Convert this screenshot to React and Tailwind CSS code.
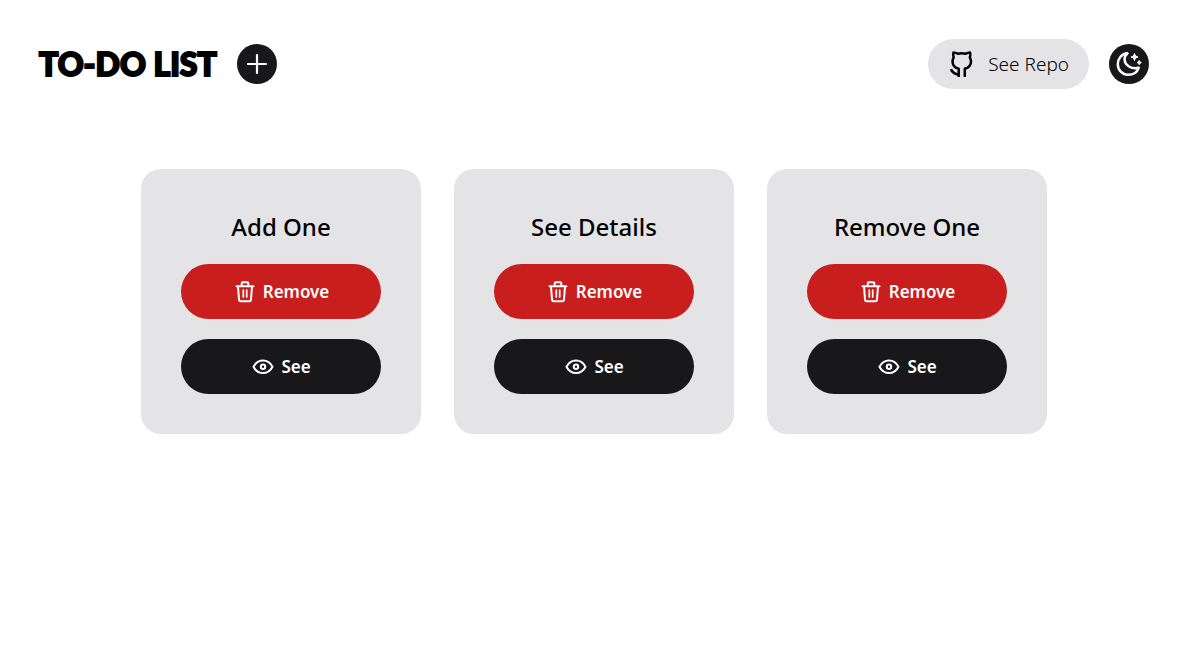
import React from "react";

const todos = ["Add One", "See Details", "Remove One"];

function PlusIcon() {
  return (
    <svg aria-hidden="true" className="size-6" viewBox="0 0 24 24" fill="none" stroke="currentColor" strokeWidth="2.2" strokeLinecap="round">
      <path d="M12 3v18M3 12h18" />
    </svg>
  );
}

function GithubIcon() {
  return (
    <svg aria-hidden="true" className="size-[30px]" viewBox="0 0 30 30" fill="none" stroke="currentColor" strokeWidth="2.5" strokeLinejoin="round">
      <path d="M10.700 28v-8.300c-3.500-1-6.200-3.500-6.200-7.300c0-1.500.4-2.900 1.200-4c-.7-1.700-.7-3.400-.2-5c1.700.1 3 .6 4.300 1.300c2.600-.5 5.300-.5 7.900 0c1.300-.7 2.600-1.200 4.300-1.300c.5 1.600.5 3.300-.2 5c.8 1.100 1.200 2.500 1.200 4c0 3.800-2.700 6.300-6.200 7.300v8.300" />
      <path d="M3 20.300c1 2.700 3.400 4.900 7.700 5.200" />
    </svg>
  );
}

function MoonIcon() {
  return (
    <svg aria-hidden="true" className="size-[30px]" viewBox="0 0 30 30" fill="currentColor" stroke="currentColor" strokeLinejoin="round">
      <path fill="none" strokeWidth="2.500" d="M13.500 4.300C7.800 4.600 3.800 9.700 3.800 15.200C3.800 21 8.300 25.800 14 25.800C19 25.800 23.200 23 24.700 18.800C17.500 20.600 10.600 16.300 10.600 10.300C10.600 7.900 11.700 5.800 13.500 4.300Z" />
      <path strokeWidth="1" d="m20.500 4.500 1 2.500 2.500 1-2.500 1-1 2.500-1-2.500-2.500-1 2.500-1Z" />
      <path strokeWidth="1" d="m25.200 11.500.7 1.400 1.400.7-1.400.7-.7 1.400-.7-1.400-1.400-.7 1.400-.7Z" />
    </svg>
  );
}

function TrashIcon() {
  return (
    <svg aria-hidden="true" className="size-6" viewBox="0 0 24 24" fill="none" stroke="currentColor" strokeWidth="2" strokeLinecap="round" strokeLinejoin="round">
      <path d="M3.500 6.200h17M8.700 6V3.300q0-1 1-1h4.600q1 0 1 1V6M5 6.500l1 13q.1 1.700 1.700 1.700h8.600q1.600 0 1.700-1.700l1-13" />
      <path strokeWidth="1.700" d="M10.300 10.200v6.800M13.700 10.200v6.800" />
    </svg>
  );
}

function EyeIcon() {
  return (
    <svg aria-hidden="true" className="size-6" viewBox="0 0 24 24" fill="none" stroke="currentColor" strokeWidth="2" strokeLinejoin="round">
      <path d="M2.500 11.800C4.500 7.800 8 5.500 12 5.500S19.500 7.800 21.500 11.800C19.500 15.800 16 18.100 12 18.100S4.500 15.800 2.500 11.800Z" />
      <circle cx="12" cy="11.800" r="2.200" />
    </svg>
  );
}

function ActionButton({ className, icon, children }) {
  return (
    <button type="button" className={"flex h-[55px] w-full items-center justify-center gap-[6px] rounded-full text-[17px] font-semibold text-white " + className}>
      {icon}
      {children}
    </button>
  );
}

function TodoCard({ title }) {
  return (
    <article className="flex w-[280px] flex-col gap-5 rounded-[20px] bg-[#e4e4e6] p-10">
      <h2 className="text-center text-2xl leading-[35px] font-medium whitespace-nowrap">{title}</h2>
      <ActionButton className="bg-[#c81e1e]" icon={<TrashIcon />}>Remove</ActionButton>
      <ActionButton className="bg-[#18181a]" icon={<EyeIcon />}>See</ActionButton>
    </article>
  );
}

export default function App() {
  return (
    <div className="min-h-screen bg-white pr-8 pl-[39px] font-['Segoe_UI','Noto_Sans',sans-serif] text-black">
      <header className="flex items-center justify-between pt-[39px]">
        <div className="flex items-center gap-5">
          <h1 className="font-['Luckiest_Guy','Lato',sans-serif] text-[32px] leading-[50px] font-black whitespace-nowrap [-webkit-text-stroke:2px_currentColor]">TO-DO LIST</h1>
          <button type="button" aria-label="Add task" className="grid size-10 place-items-center rounded-full bg-[#18181a] text-white">
            <PlusIcon />
          </button>
        </div>
        <div className="flex items-center gap-5">
          <a href="#repo" className="flex h-[50px] items-center gap-[10px] rounded-full bg-[#e4e4e6] px-5 text-[19px] font-light">
            <GithubIcon />
            See Repo
          </a>
          <button type="button" aria-label="Dark mode" className="grid size-10 place-items-center rounded-full bg-[#18181a] text-white">
            <MoonIcon />
          </button>
        </div>
      </header>
      <main className="flex flex-wrap justify-center gap-[33px] pt-20 pb-10">
        {todos.map((title) => (
          <TodoCard key={title} title={title} />
        ))}
      </main>
    </div>
  );
}
